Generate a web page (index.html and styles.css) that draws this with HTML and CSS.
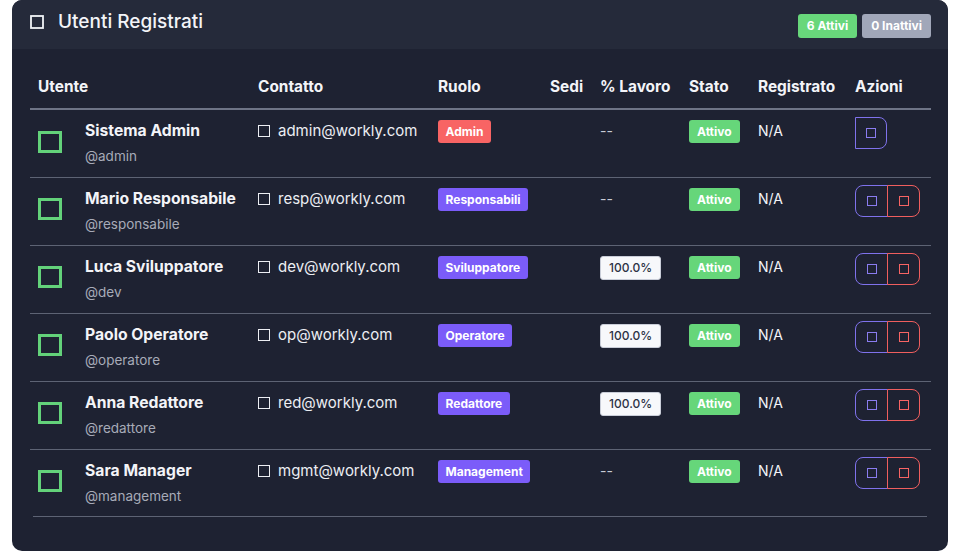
FILE: index.html
```html
<!DOCTYPE html>
<html lang="it">
<head>
<meta charset="utf-8">
<title>Utenti Registrati</title>
<link rel="stylesheet" href="styles.css">
</head>
<body>
<div class="card">
  <div class="card-header">
    <div class="title">
      <svg class="title-icon" width="14" height="14" viewBox="0 0 14 14"><rect x="1" y="1" width="12" height="12" fill="none" stroke="#f1f3f7" stroke-width="1.8"/></svg>
      <span>Utenti Registrati</span>
    </div>
    <div class="counts">
      <span class="count count-on">6 Attivi</span>
      <span class="count count-off">0 Inattivi</span>
    </div>
  </div>
  <div class="card-body">
    <table class="users">
      <colgroup>
        <col class="c-user"><col class="c-contact"><col class="c-role"><col class="c-sedi"><col class="c-work"><col class="c-state"><col class="c-reg"><col class="c-act">
      </colgroup>
      <thead>
        <tr><th>Utente</th><th>Contatto</th><th>Ruolo</th><th>Sedi</th><th>% Lavoro</th><th>Stato</th><th>Registrato</th><th>Azioni</th></tr>
      </thead>
      <tbody>
        <tr>
          <td><div class="user"><span class="avatar"></span><div><div class="name">Sistema Admin</div><div class="handle">@admin</div></div></div></td>
          <td><div class="mail"><span class="mail-ico"></span>admin@workly.com</div></td>
          <td><span class="role role-red">Admin</span></td>
          <td></td>
          <td><span class="dash">--</span></td>
          <td><span class="state">Attivo</span></td>
          <td><span class="reg">N/A</span></td>
          <td class="act"><div class="btns"><span class="btn btn-edit btn-solo"><i></i></span></div></td>
        </tr>
        <tr>
          <td><div class="user"><span class="avatar"></span><div><div class="name">Mario Responsabile</div><div class="handle">@responsabile</div></div></div></td>
          <td><div class="mail"><span class="mail-ico"></span>resp@workly.com</div></td>
          <td><span class="role">Responsabili</span></td>
          <td></td>
          <td><span class="dash">--</span></td>
          <td><span class="state">Attivo</span></td>
          <td><span class="reg">N/A</span></td>
          <td class="act"><div class="btns"><span class="btn btn-edit"><i></i></span><span class="btn btn-del"><i></i></span></div></td>
        </tr>
        <tr>
          <td><div class="user"><span class="avatar"></span><div><div class="name">Luca Sviluppatore</div><div class="handle">@dev</div></div></div></td>
          <td><div class="mail"><span class="mail-ico"></span>dev@workly.com</div></td>
          <td><span class="role">Sviluppatore</span></td>
          <td></td>
          <td><span class="pct">100.0%</span></td>
          <td><span class="state">Attivo</span></td>
          <td><span class="reg">N/A</span></td>
          <td class="act"><div class="btns"><span class="btn btn-edit"><i></i></span><span class="btn btn-del"><i></i></span></div></td>
        </tr>
        <tr>
          <td><div class="user"><span class="avatar"></span><div><div class="name">Paolo Operatore</div><div class="handle">@operatore</div></div></div></td>
          <td><div class="mail"><span class="mail-ico"></span>op@workly.com</div></td>
          <td><span class="role">Operatore</span></td>
          <td></td>
          <td><span class="pct">100.0%</span></td>
          <td><span class="state">Attivo</span></td>
          <td><span class="reg">N/A</span></td>
          <td class="act"><div class="btns"><span class="btn btn-edit"><i></i></span><span class="btn btn-del"><i></i></span></div></td>
        </tr>
        <tr>
          <td><div class="user"><span class="avatar"></span><div><div class="name">Anna Redattore</div><div class="handle">@redattore</div></div></div></td>
          <td><div class="mail"><span class="mail-ico"></span>red@workly.com</div></td>
          <td><span class="role">Redattore</span></td>
          <td></td>
          <td><span class="pct">100.0%</span></td>
          <td><span class="state">Attivo</span></td>
          <td><span class="reg">N/A</span></td>
          <td class="act"><div class="btns"><span class="btn btn-edit"><i></i></span><span class="btn btn-del"><i></i></span></div></td>
        </tr>
        <tr class="last">
          <td><div class="user"><span class="avatar"></span><div><div class="name">Sara Manager</div><div class="handle">@management</div></div></div></td>
          <td><div class="mail"><span class="mail-ico"></span>mgmt@workly.com</div></td>
          <td><span class="role">Management</span></td>
          <td></td>
          <td><span class="dash">--</span></td>
          <td><span class="state">Attivo</span></td>
          <td><span class="reg">N/A</span></td>
          <td class="act"><div class="btns"><span class="btn btn-edit"><i></i></span><span class="btn btn-del"><i></i></span></div></td>
        </tr>
      </tbody>
    </table>
    <div class="end-rule"></div>
  </div>
</div>
</body>
</html>
```
FILE: styles.css
```css
* { box-sizing: border-box; }
html, body { margin: 0; padding: 0; background: #ffffff; }
body {
  font-family: Inter, "Noto Sans", "Liberation Sans", sans-serif;
  color: #f1f3f7;
  overflow: hidden;
}
.card {
  margin: 0 12px;
  height: 551px;
  background: #1e2232;
  border-radius: 10px;
  overflow: hidden;
}
.card-header {
  height: 49px;
  background: #252a3a;
  display: flex;
  justify-content: space-between;
  align-items: flex-start;
  padding: 11px 17px 0 18px;
}
.title {
  display: flex;
  align-items: center;
  gap: 14px;
  font-size: 19px;
  line-height: 21px;
  font-weight: 500;
  color: #f3f4f8;
}
.title-icon { display: block; margin-top: 1px; }
.counts { display: flex; gap: 5px; margin-top: 3px; }
.count {
  height: 24px;
  line-height: 24px;
  padding: 0 9px;
  border-radius: 3px;
  font-size: 12px;
  font-weight: 700;
  color: #ffffff;
}
.count-on { background: #68d77b; }
.count-off { background: #a1a7b9; }
.card-body { padding: 16px 17px 0 18px; }
.users {
  width: 901px;
  border-collapse: collapse;
  table-layout: fixed;
}
.c-user { width: 220px; }
.c-contact { width: 180px; }
.c-role { width: 112px; }
.c-sedi { width: 50px; }
.c-work { width: 89px; }
.c-state { width: 69px; }
.c-reg { width: 97px; }
.c-act { width: 84px; }
.users th {
  height: 44px;
  padding: 0 8px;
  text-align: left;
  font-size: 15.4px;
  font-weight: 700;
  color: #f3f4f8;
  border-bottom: 2px solid #6e7486;
  white-space: nowrap;
}
.users td {
  height: 68px;
  padding: 10px 8px 0;
  vertical-align: top;
  border-bottom: 1px solid #5d6374;
  white-space: nowrap;
}
.users tr.last td { border-bottom: none; height: 67px; }
.end-rule {
  height: 1px;
  background: #5d6374;
  margin: 0 4px 0 3px;
}
.user { display: flex; align-items: center; gap: 23px; }
.avatar {
  width: 24px;
  height: 22px;
  border: 3px solid #63d27a;
  flex: none;
  margin-top: -3px;
}
.name {
  font-size: 15.7px;
  line-height: 22px;
  font-weight: 700;
  color: #f3f4f8;
}
.handle {
  font-size: 13.5px;
  line-height: 20px;
  margin-top: 4px;
  color: #a7abb8;
}
.mail {
  display: flex;
  align-items: center;
  font-size: 15px;
  line-height: 22px;
  color: #eceef3;
}
.mail-ico {
  width: 12px;
  height: 12px;
  border: 1.5px solid #eceef3;
  margin-right: 8px;
  flex: none;
}
.role {
  display: inline-block;
  height: 23px;
  line-height: 23px;
  padding: 0 7.5px;
  border-radius: 3px;
  font-size: 12px;
  font-weight: 700;
  color: #ffffff;
  background: #7b5cf9;
}
.role-red { background: #f86464; }
.dash {
  display: inline-block;
  font-size: 14px;
  line-height: 22px;
  color: #c9ccd6;
}
.pct {
  display: inline-block;
  height: 24px;
  line-height: 22px;
  padding: 0 8px;
  border-radius: 3px;
  background: #f7f8fb;
  border: 1px solid #c9cdd8;
  font-size: 12px;
  font-weight: 500;
  color: #2c3245;
}
.state {
  display: inline-block;
  height: 23px;
  line-height: 23px;
  padding: 0 8px;
  border-radius: 3px;
  background: #66d67a;
  font-size: 12px;
  font-weight: 700;
  color: #ffffff;
}
.reg {
  display: inline-block;
  font-size: 14px;
  line-height: 22px;
  color: #f3f4f8;
}
.users td.act { padding-top: 7px; }
.btns { display: flex; }
.btn {
  width: 33px;
  height: 32px;
  display: flex;
  align-items: center;
  justify-content: center;
  border: 1px solid #7f72ec;
}
.btn i {
  display: block;
  width: 10px;
  height: 10px;
  border: 1.5px solid currentColor;
}
.btn-edit { color: #8a7cf0; border-radius: 8px 0 0 8px; }
.btn-solo { width: 32px; border-radius: 0 8px 8px 0; }
.btn-del {
  color: #f86464;
  border-color: #f05e5e;
  border-radius: 0 8px 8px 0;
  margin-left: -1px;
}
```
